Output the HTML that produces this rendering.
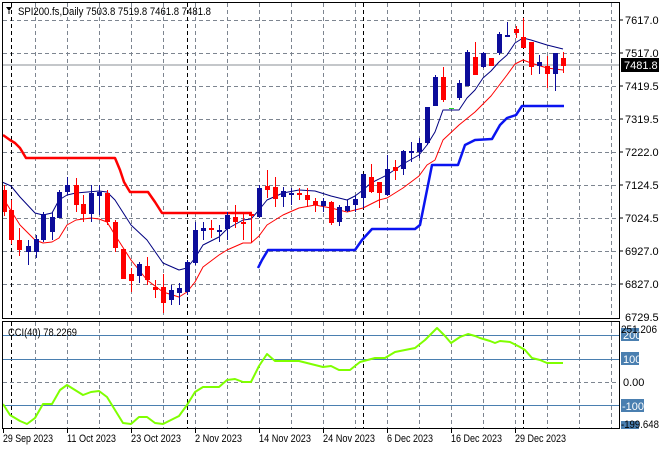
<!DOCTYPE html>
<html><head><meta charset="utf-8"><style>
html,body{margin:0;padding:0;background:#fff;}
svg{display:block;font-family:"Liberation Sans",sans-serif;font-size:11px;}
</style></head><body>
<svg id="s" width="660" height="450" viewBox="0 0 660 450" xmlns="http://www.w3.org/2000/svg">
<rect width="660" height="450" fill="#fff"/>
<g id="grid"></g>
<line x1="2" y1="65" x2="620" y2="65" stroke="#8a8f96" stroke-width="1"/>
<g id="lines"></g>
<g id="candles"></g>
<rect x="2.5" y="2.5" width="617" height="316" fill="none" stroke="#000"/>
<rect x="2.5" y="321.5" width="617" height="107" fill="none" stroke="#000"/>
<path d="M6 7 L12 7 L9 11 Z" fill="#000"/>
<line x1="9" y1="11" x2="9" y2="14" stroke="#000"/>
<text x="18" y="15" fill="#000" textLength="193" lengthAdjust="spacingAndGlyphs">SPI200.fs,Daily  7503.8 7519.8 7461.8 7481.8</text>
<text x="8" y="336" fill="#000" textLength="69" lengthAdjust="spacingAndGlyphs">CCI(40) 78.2269</text>
<g fill="#000">
<text x="625" y="24">7617.0</text>
<text x="625" y="57">7517.0</text>
<text x="625" y="90">7419.5</text>
<text x="625" y="123">7319.5</text>
<text x="625" y="156">7222.0</text>
<text x="625" y="189">7124.5</text>
<text x="625" y="222">7024.5</text>
<text x="625" y="255">6927.0</text>
<text x="625" y="288">6827.0</text>
<text x="625" y="321">6729.5</text>
</g>
<g stroke="#000"><line x1="620" y1="20" x2="623" y2="20"/><line x1="620" y1="53" x2="623" y2="53"/><line x1="620" y1="86" x2="623" y2="86"/><line x1="620" y1="119" x2="623" y2="119"/><line x1="620" y1="152" x2="623" y2="152"/><line x1="620" y1="185" x2="623" y2="185"/><line x1="620" y1="218" x2="623" y2="218"/><line x1="620" y1="251" x2="623" y2="251"/><line x1="620" y1="284" x2="623" y2="284"/></g>
<rect x="621" y="58" width="38" height="14" fill="#000"/>
<text x="624" y="69" fill="#fff">7481.8</text>
<rect x="621" y="328" width="18" height="13" fill="#4a7fb0"/>
<text x="623" y="339" fill="#fff">200</text>
<text x="621" y="333" fill="#000" textLength="36" lengthAdjust="spacingAndGlyphs">251.206</text>
<rect x="621" y="352" width="18" height="13" fill="#4a7fb0"/>
<text x="623" y="363" fill="#fff">100</text>
<text x="623" y="386" fill="#000">0.00</text>
<rect x="621" y="399" width="23" height="13" fill="#4a7fb0"/>
<text x="622" y="410" fill="#fff">-100</text>
<rect x="621" y="421" width="18" height="8" fill="#4a7fb0"/>
<text x="621" y="428" fill="#000" textLength="38" lengthAdjust="spacingAndGlyphs">-199.648</text>
<g fill="#000">
<text x="3" y="442" textLength="50" lengthAdjust="spacingAndGlyphs">29 Sep 2023</text>
<text x="67" y="442" textLength="49" lengthAdjust="spacingAndGlyphs">11 Oct 2023</text>
<text x="131" y="442" textLength="50" lengthAdjust="spacingAndGlyphs">23 Oct 2023</text>
<text x="195" y="442" textLength="47" lengthAdjust="spacingAndGlyphs">2 Nov 2023</text>
<text x="259" y="442" textLength="52" lengthAdjust="spacingAndGlyphs">14 Nov 2023</text>
<text x="323" y="442" textLength="52" lengthAdjust="spacingAndGlyphs">24 Nov 2023</text>
<text x="387" y="442" textLength="46" lengthAdjust="spacingAndGlyphs">6 Dec 2023</text>
<text x="451" y="442" textLength="51" lengthAdjust="spacingAndGlyphs">16 Dec 2023</text>
<text x="515" y="442" textLength="51" lengthAdjust="spacingAndGlyphs">29 Dec 2023</text>
</g>
<g id="ticks" stroke="#000"></g>
</svg>
<script>
var NS="http://www.w3.org/2000/svg";
function el(p,t,a){var e=document.createElementNS(NS,t);for(var k in a)e.setAttribute(k,a[k]);document.getElementById(p).appendChild(e);return e;}
var hy=[20,53,86,119,152,185,218,251,284];
hy.forEach(function(y){el("grid","line",{x1:3,y1:y+.5,x2:620,y2:y+.5,stroke:"#7d8590","stroke-dasharray":"4,3"});});
var blk=[11,187,363,523];
for(var x=35;x<620;x+=32){
 el("grid","line",{x1:x+.5,y1:3,x2:x+.5,y2:318,stroke:"#7d8590","stroke-dasharray":"4,3"});
 el("grid","line",{x1:x+.5,y1:322,x2:x+.5,y2:428,stroke:"#7d8590","stroke-dasharray":"4,3"});
}
blk.forEach(function(x){el("grid","line",{x1:x+.5,y1:3,x2:x+.5,y2:318,stroke:"#000","stroke-dasharray":"4,3"});el("grid","line",{x1:x+.5,y1:322,x2:x+.5,y2:428,stroke:"#000","stroke-dasharray":"4,3"});});
[335,359,405].forEach(function(y){el("grid","line",{x1:3,y1:y+.5,x2:620,y2:y+.5,stroke:"#4a7fb0"});});
el("grid","line",{x1:3,y1:382.5,x2:620,y2:382.5,stroke:"#7d8590","stroke-dasharray":"4,3"});
[3,67,131,195,259,323,387,451,515].forEach(function(x){el("ticks","line",{x1:x+.5,y1:429,x2:x+.5,y2:433});});
function pl(pts,c,w){el("lines","polyline",{points:pts,fill:"none",stroke:c,"stroke-width":w,"stroke-linejoin":"round"});}
pl("3,135 10,140 15,143 20,148 26,158 115,158 120,170 124,182 130,192 148,192 155,202 162,213 252,213","#ff0000",2.5);
pl("258,268 262,260 268,250 355,250 362,240 372,229 415,229 420,225 425,200 432,165 458,165 465,145 475,140 492,139 500,125 507,118 516,115 522,106 564,106","#0a14f0",2.5);
pl("2,182 11,186 20,197 35,213 43,215 52,213 59,200 67,195 76,193 99,191 107,192 115,200 131,225 147,240 163,263 179,270 187,268 195,258 203,245 219,237 227,229 243,220 251,219 259,210 267,200 283,193 299,190 315,191 331,196 347,200 355,196 363,190 371,183 387,175 403,164 419,155 427,145 435,132 443,110 459,110 467,98 475,90 483,78 491,71 499,62 507,55 515,43 523,38 531,40 547,45 563,49","#000080",1);
pl("3,198 20,225 35,240 43,243 52,242 59,238 67,225 76,220 91,218 99,219 107,222 115,235 131,260 147,280 163,292 179,297 187,292 195,282 203,267 219,255 227,250 243,243 251,243 259,236 267,225 283,215 299,208 315,205 331,208 347,212 363,208 379,200 387,198 403,188 419,176 427,165 435,160 443,140 459,125 475,112 491,96 507,75 515,64 523,60 531,63 547,68 563,70","#ff0000",1);
pl("3,404 10,415 20,421 27,424 35,418 43,404 52,404 60,390 67,385 75,390 83,395 91,392 99,391 107,397 115,410 123,423 131,424 139,417 147,417 155,423 163,424 171,420 179,416 187,405 195,392 203,387 219,387 227,380 235,379 243,382 251,382 259,366 267,354 275,361 299,361 315,365 323,367 331,366 339,370 350,370 360,362 375,358 385,358 395,352 405,350 415,348 425,340 437,328 445,336 451,343 460,337 468,334 475,336 480,338 490,341 495,343 500,341 510,342 520,347 525,350 532,358 540,360 547,363 563,363","#7fff00",2);
var C=[[4,185,190,212,216,'r'],[11,200,210,240,244,'r'],[19,228,240,250,256,'r'],[28,240,246,252,265,'b'],[36,235,239,252,258,'b'],[43,212,214,240,242,'b'],[52,212,217,232,240,'b'],[59,190,192,218,218,'b'],[67,177,185,192,195,'b'],[76,178,185,205,212,'r'],[83,195,204,214,222,'r'],[91,185,193,214,222,'b'],[99,185,192,196,215,'b'],[107,190,193,222,225,'r'],[115,220,222,248,252,'r'],[123,249,249,279,279,'r'],[131,268,274,281,292,'r'],[139,262,264,276,283,'b'],[147,257,266,280,285,'r'],[155,280,287,290,298,'r'],[163,274,287,303,313,'r'],[171,285,290,300,305,'b'],[179,283,288,293,305,'b'],[187,260,262,292,295,'b'],[195,222,230,263,265,'b'],[203,222,228,231,240,'b'],[211,220,228,230,238,'r'],[219,225,230,232,242,'b'],[227,212,215,229,240,'b'],[235,205,217,222,228,'r'],[243,213,222,224,240,'r'],[251,212,214,216,243,'r'],[259,185,188,217,218,'b'],[267,170,186,190,198,'r'],[275,177,187,199,207,'r'],[283,187,191,197,207,'b'],[291,188,193,195,205,'b'],[299,188,193,195,200,'r'],[307,188,195,200,207,'r'],[315,198,201,205,212,'r'],[323,198,201,206,212,'b'],[331,201,202,223,225,'r'],[339,205,207,222,226,'b'],[347,200,206,211,212,'b'],[355,195,199,205,212,'b'],[363,174,174,198,208,'b'],[371,164,177,192,193,'r'],[379,182,182,193,208,'r'],[387,155,169,195,196,'b'],[395,160,167,171,180,'r'],[403,150,151,169,175,'b'],[411,142,151,153,162,'b'],[419,138,143,152,158,'b'],[427,107,107,143,145,'b'],[435,75,77,106,106,'b'],[443,67,77,100,102,'r'],[451,108,108,109,109,'g'],[459,80,83,98,100,'b'],[467,50,52,86,86,'b'],[475,42,57,75,75,'r'],[483,52,53,67,68,'b'],[491,58,58,66,66,'r'],[499,32,34,53,55,'b'],[507,22,35,37,37,'b'],[516,26,29,33,38,'r'],[523,18,37,48,48,'r'],[531,42,42,67,75,'r'],[539,55,62,66,74,'b'],[547,56,66,74,88,'r'],[555,53,53,74,91,'b'],[563,52,58,66,73,'r']];
C.forEach(function(c){var col=c[5]=='r'?'#ff0000':(c[5]=='b'?'#0c0c9a':'#22dd22');
 el("candles","line",{x1:c[0]+.5,y1:c[1],x2:c[0]+.5,y2:c[4],stroke:col});
 el("candles","rect",{x:c[0]-2,y:c[2],width:5,height:Math.max(1,c[3]-c[2]),fill:col});});
</script>
</body></html>
